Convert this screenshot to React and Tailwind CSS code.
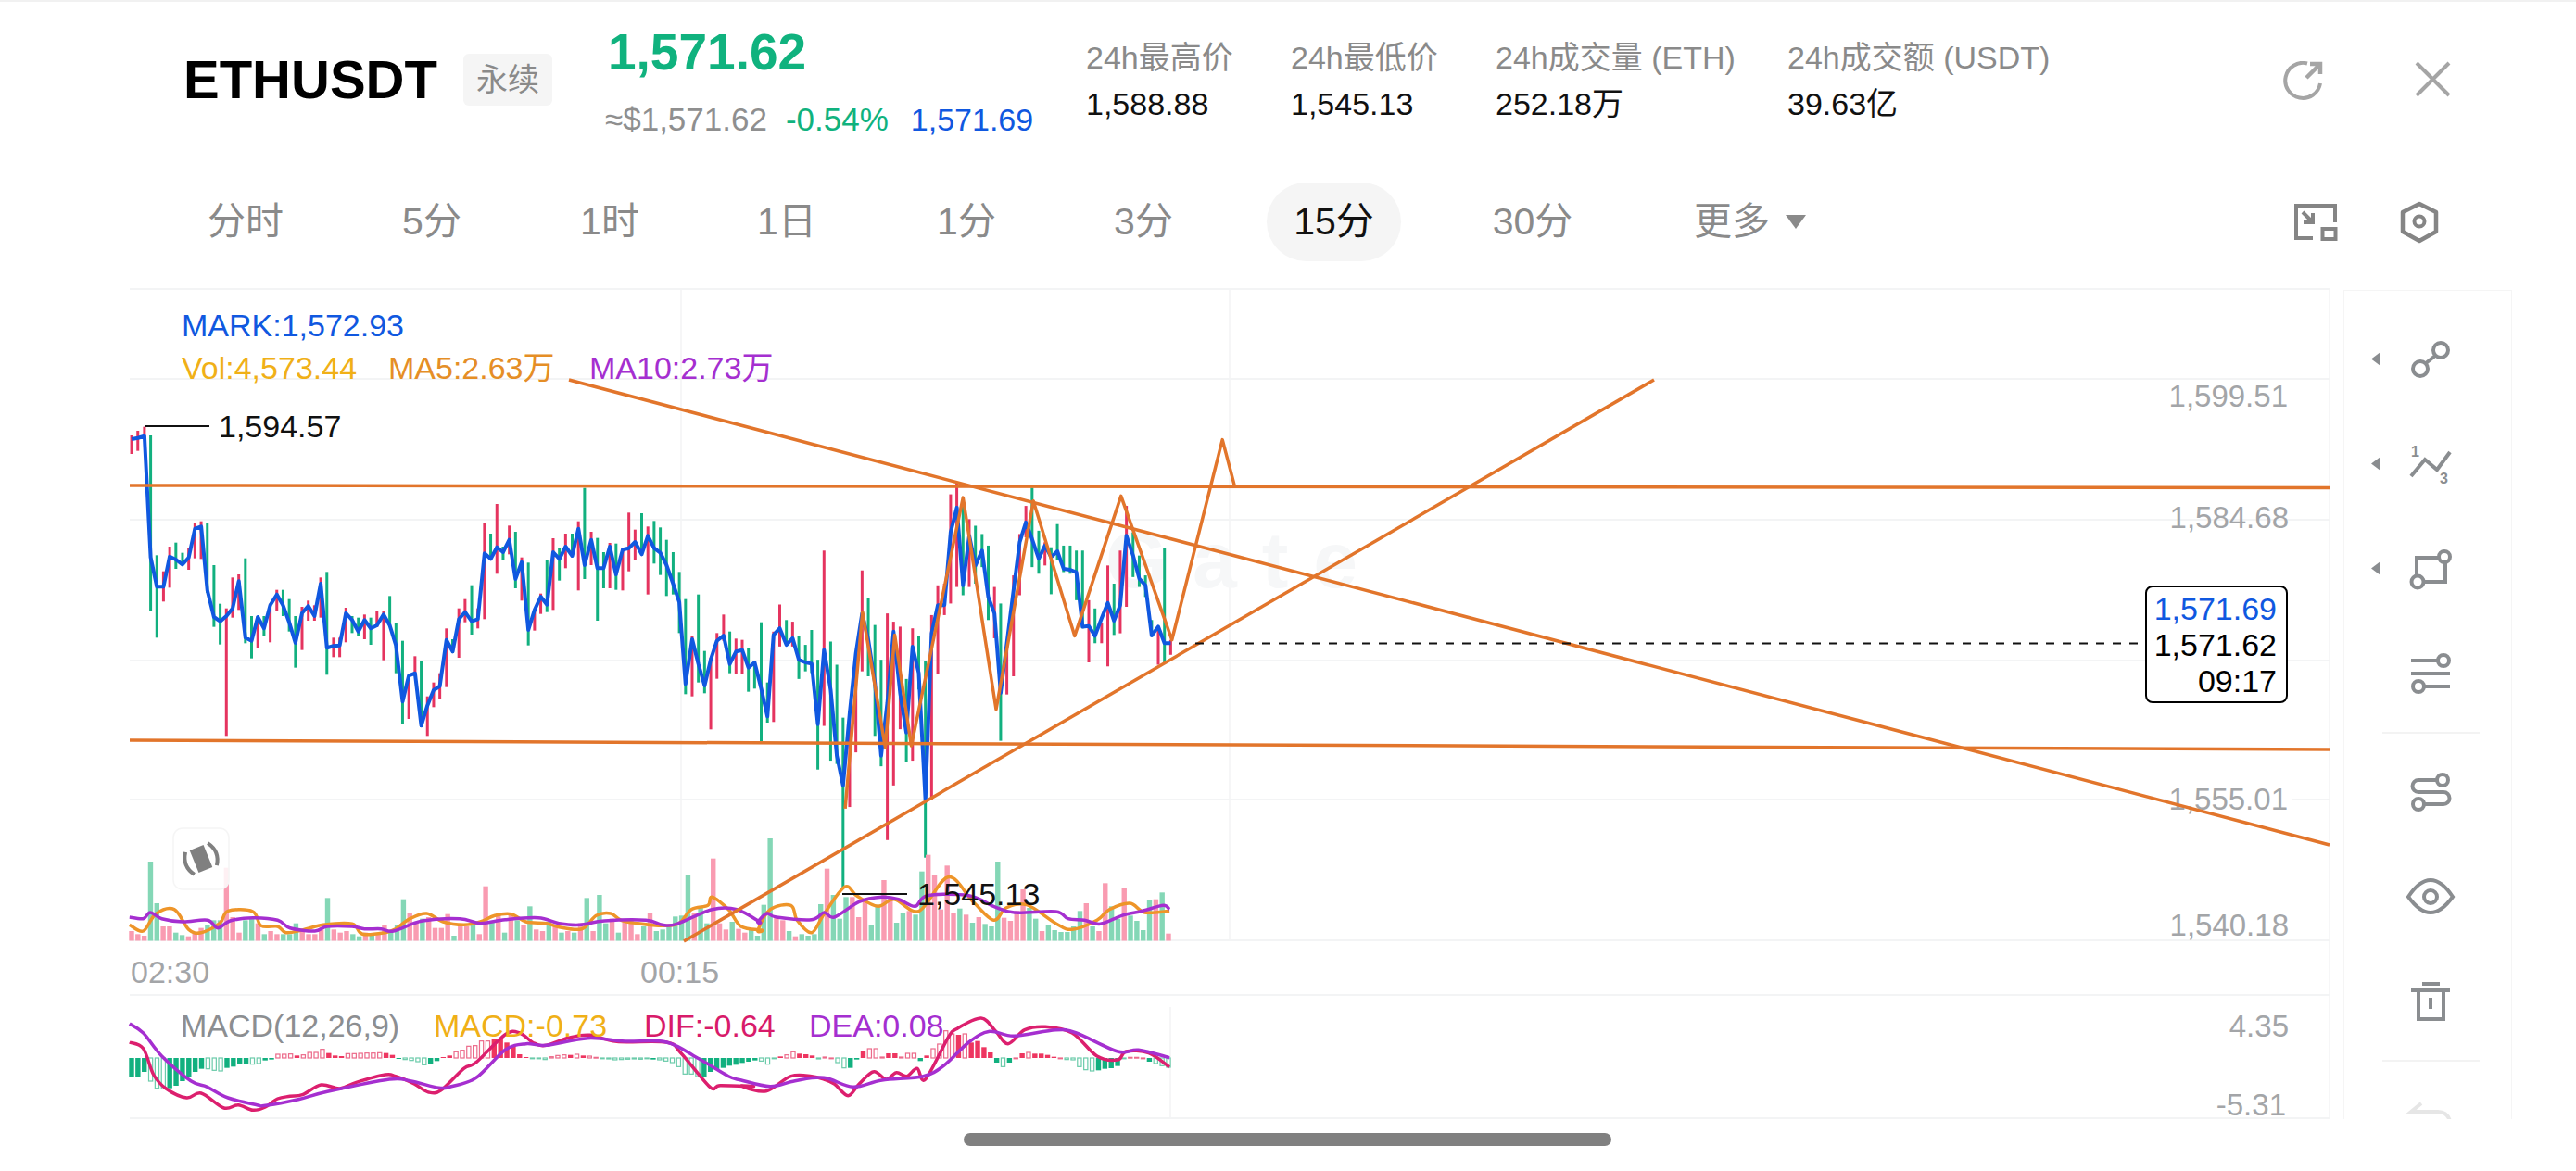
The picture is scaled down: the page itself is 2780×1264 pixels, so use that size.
const FONT = "'Liberation Sans','Noto Sans CJK SC',sans-serif";

const GREEN = '#12b07f';
const RED = '#e5345f';
const BLUE = '#1058e0';
const ORANGE = '#e2752b';
const PURPLE = '#a52fd0';

// crop helpers: readings were taken from zoomed crops of the chart
const a3 = ([X, Y]) => [130 + X / 2.24, 300 + Y / 3];
const a4 = ([X, Y]) => [700 + X / 2.24, 480 + Y / 2.8];
const a5 = ([X, Y]) => [130 + X / 2.24, 880 + Y / 3];
const a6 = ([X, Y]) => [800 + X / 2.24, 880 + Y / 3];
const pts = list => list.map(p => `${p[0].toFixed(1)},${p[1].toFixed(1)}`).join(' ');

// catmull-rom through the points, for the indicator curves
const smooth = list => {
  let d = `M${list[0][0].toFixed(1)} ${list[0][1].toFixed(1)}`;
  for (let i = 0; i < list.length - 1; i++) {
    const p0 = list[i - 1] || list[i];
    const p1 = list[i];
    const p2 = list[i + 1];
    const p3 = list[i + 2] || p2;
    const c1x = p1[0] + (p2[0] - p0[0]) / 6;
    const c1y = p1[1] + (p2[1] - p0[1]) / 6;
    const c2x = p2[0] - (p3[0] - p1[0]) / 6;
    const c2y = p2[1] - (p3[1] - p1[1]) / 6;
    d += `C${c1x.toFixed(1)} ${c1y.toFixed(1)} ${c2x.toFixed(1)} ${c2y.toFixed(1)} ${p2[0].toFixed(1)} ${p2[1].toFixed(1)}`;
  }
  return d;
};

// X, colour, wick top, wick bottom, close
const candles3 = [
  [27,'r',510,570,522],[42,'r',495,560,518],[58,'r',482,515,512],[73,'g',510,1078,905],[88,'g',898,1165,1000],
  [104,'r',950,1048,1000],[119,'r',870,1003,902],[134,'g',857,942,912],[150,'g',890,930,928],[165,'r',875,945,905],
  [180,'r',793,908,812],[195,'r',788,910,805],[210,'g',792,1020,1012],[226,'g',930,1130,1098],[241,'g',1055,1187,1112],
  [256,'r',1070,1483,1095],[271,'r',970,1100,1070],[286,'r',960,1075,982],[302,'g',908,1183,1165],[317,'g',1095,1232,1175],
  [332,'r',1095,1200,1098],[347,'g',1095,1160,1135],[362,'r',1055,1180,1060],[378,'r',1010,1080,1025],[393,'g',1010,1095,1060],
  [408,'g',1040,1145,1115],[423,'g',1095,1262,1182],[439,'r',1065,1205,1085],[454,'r',1045,1110,1062],[469,'r',1060,1110,1095],
  [484,'r',970,1100,990],[499,'g',952,1285,1198],[515,'r',1165,1228,1192],[530,'r',1165,1228,1190],[545,'r',1068,1180,1085],
  [560,'g',1095,1150,1108],[575,'g',1100,1160,1145],[590,'r',1090,1170,1108],[605,'g',1100,1188,1135],[620,'r',1080,1130,1125],
  [636,'r',1078,1238,1090],[651,'g',1030,1130,1125],[666,'g',1118,1280,1190],[682,'g',1175,1443,1372],[697,'r',1290,1428,1288],
  [712,'r',1225,1285,1280],[727,'g',1240,1455,1450],[742,'r',1355,1483,1385],[757,'r',1310,1390,1335],[772,'r',1280,1362,1322],
  [788,'r',1135,1325,1172],[803,'g',1170,1215,1210],[818,'r',1070,1230,1105],[833,'r',1040,1115,1082],[849,'g',995,1155,1112],
  [864,'r',1070,1135,1105],[880,'r',793,1105,892],[895,'g',828,915,910],[910,'r',732,958,872],[925,'g',870,915,888],
  [940,'r',802,895,848],[955,'g',822,1005,975],[970,'r',905,1045,920],[986,'g',922,1190,1140],[1001,'r',1075,1142,1075],
  [1016,'r',1022,1088,1032],[1031,'g',912,1082,1058],[1046,'r',843,1075,888],[1061,'g',875,980,910],[1076,'r',828,940,870],
  [1092,'g',828,900,900],[1107,'r',788,1012,812],[1122,'g',680,975,930],[1138,'r',822,930,848],[1153,'g',842,1110,940],
  [1168,'g',888,1005,940],[1183,'r',858,1005,870],[1198,'g',860,1010,960],[1214,'r',875,1012,880],[1229,'r',760,950,875],
  [1244,'r',815,915,855],[1260,'g',762,895,895],[1275,'r',805,1025,835],[1290,'g',787,925,875],[1305,'g',808,962,890],
  [1320,'g',848,1030,930],[1336,'g',888,1025,990],[1351,'g',952,1150,1050],[1366,'g',1040,1348,1315],[1382,'r',1160,1355,1170],
  [1397,'g',1025,1310,1250],[1412,'g',1208,1345,1320],[1427,'r',1230,1462,1235],[1442,'r',1150,1298,1175],[1458,'r',1090,1175,1158],
  [1473,'g',1145,1280,1250],[1488,'r',1168,1282,1210],[1503,'r',1172,1282,1205],[1518,'g',1200,1340,1262],[1533,'g',1240,1330,1245],
  [1549,'g',1115,1500,1330],[1564,'g',1310,1440,1420],
];

const candles4 = [
  [302,'r',565,838,575],[317,'r',483,610,555],[333,'g',530,600,605],[348,'r',535,610,585],[363,'g',578,708,650],
  [379,'g',605,685,658],[394,'g',560,690,662],[409,'g',650,982,845],[424,'r',320,850,620],[440,'g',595,955,740],
  [455,'g',665,965,940],[470,'g',825,1340,1030],[486,'r',805,1095,810],[501,'r',630,930,630],[516,'r',380,685,510],
  [531,'g',462,700,590],[547,'g',545,880,720],[562,'g',650,972,940],[577,'r',510,1195,780],[592,'r',535,1030,565],
  [608,'r',550,860,750],[623,'g',708,958,870],[638,'r',555,955,610],[653,'g',578,740,690],[669,'g',655,1248,1075],
  [684,'r',515,1075,570],[699,'r',425,692,485],[715,'r',420,515,485],[730,'r',150,480,265],[745,'r',115,430,190],
  [760,'g',175,455,425],[775,'r',225,430,275],[790,'g',245,420,365],[806,'g',270,370,320],[821,'g',305,530,460],
  [836,'r',430,585,510],[851,'g',480,895,750],[866,'r',600,755,600],[882,'r',395,700,440],[897,'r',270,455,295],
  [912,'r',185,280,235],[927,'g',130,370,285],[943,'g',260,390,345],[958,'r',295,365,305],[973,'g',310,452,340],
  [988,'g',240,350,322],[1003,'g',305,385,375],[1019,'g',305,390,378],[1034,'g',320,470,385],[1049,'g',320,555,550],
  [1064,'r',470,658,548],[1079,'g',495,600,578],[1095,'r',540,600,525],[1110,'r',365,670,478],[1125,'g',420,575,532],
  [1140,'r',320,570,485],[1155,'r',185,490,275],[1171,'g',265,400,335],[1186,'g',335,430,405],[1201,'g',395,460,425],
  [1216,'g',530,580,577],[1232,'r',550,665,550],[1247,'g',312,660,600],[1262,'r',590,635,600],
];

const vols5 = 'r375 r385 r390 g150 g285 r360 r360 g380 g388 r392 r380 r365 g355 g340 g340 r170 r330 r380 g340 g330 r350 g385 r375 r385 g385 g385 g350 r375 r385 r385 r370 g268 r370 r380 r375 g385 g392 r380 g382 r385 r355 g378 g355 g272 r315 r345 g335 r330 r365 r365 r320 g390 r355 r360 g355 r385 r230 g345 r315 g380 r320 g340 r355 g295 r370 r375 g345 r355 g380 r375 g380 r350 g268 r375 g258 g350 r335 g380 r345 r340 r385 g360 r318 g375 g370 g360 g328 g325 g195 r315 g300 g350 r140 r350 r370 g345 r368 r380 g370 g390 g290 g75'.split(' ');
const vols6 = 'r330 r340 g375 r392 g385 g390 g385 g288 r173 g258 g335 g265 r265 r330 r275 g357 g290 r210 r270 g348 g315 r310 g322 g182 r128 r195 r305 r163 r318 g302 r322 g348 r330 g352 g360 g150 r332 r342 r310 r240 g300 g335 r375 g355 g372 g378 g378 g360 g310 r285 g360 r375 r220 g295 g335 r237 g325 g342 g372 g275 r272 g250 r383'.split(' ');

const ma5Vol = [
  ...[[22,355],[55,375],[85,320],[130,305],[165,370],[195,380],[240,350],[260,310],[320,312],[340,358],[380,360],[400,380],[440,372],[490,355],[560,352],[585,385],[640,380],[665,368],[700,335],[740,318],[780,345],[830,355],[870,345],[905,325],[945,320],[980,345],[1030,350],[1060,362],[1115,368],[1150,325],[1185,318],[1210,340],[1250,350],[1310,358],[1350,350],[1380,305],[1420,292],[1430,265],[1470,305],[1500,360],[1550,372]].map(a5),
  ...[[40,372],[70,305],[120,292],[135,340],[170,380],[200,320],[250,232],[280,262],[330,295],[370,272],[430,310],[500,200],[560,280],[610,340],[640,300],[690,290],[760,350],[800,370],[860,340],[890,305],[940,285],[975,315],[1035,310]].map(a6),
];
const ma10Vol = [
  ...[[22,330],[55,335],[72,315],[100,335],[150,345],[210,340],[235,365],[265,342],[320,332],[380,340],[410,365],[470,375],[500,360],[560,360],[590,368],[630,368],[660,375],[730,342],[820,335],[870,350],[930,338],[1010,332],[1060,350],[1110,355],[1170,342],[1270,340],[1310,355],[1345,352],[1430,305],[1490,305],[1545,345]].map(a5),
  ...[[40,345],[62,318],[85,330],[170,338],[200,315],[225,330],[285,280],[340,265],[380,272],[420,295],[450,260],[550,260],[610,295],[660,315],[760,312],[790,335],[830,340],[868,352],[920,325],[970,310],[1020,292],[1035,305]].map(a6),
];

const hist5 = '-60F -60F -45F -75H -98H -100H -98F -90F -75F -60F -45F -35F -35H -40H -42H -32F -28F -18F -18F -20H -18H -8F -5F 12H 12H 13H 8F 10H 18H 18H 28H 16F 8F 6F 14H 14H 15H 16H 16H 17H 16F 10F -3F -5H -8H -12H -22H -18F -10F 3F 8F 20H 25H 38H 40H 55H 55H 60F 62F 50F 40F 12F 3F -2H -2H -5H 4H 8H 10H 10F 12H 8F 6H 2H -1H -3H -6H -5H -4H -3H -4H -2H -5F -6H -10H -15H -28H -52H -52H -60H -60F -45F -38F -32F -25F -22F -16F -12F -8F -10H -20H'.split(' ');
const hist6 = '-2H 5F 10H 20H 14F 12F 8F -3H 3H 0H -15H -32H -32F -5F 22F 30H 30H 3H 15F 15F 3H 15H 15H -10F 8F 30H 45H 88H 78H 75F 78H 50F 55F 35F 18F -15F -28H -15F 0H 15F 18H 14F 14F 10F 4F 0H -5H -6H -28H -38H -42H -40F -35F -33F -26F -2H 2H 2H 0H -12F -18H -25H -30H'.split(' ');

const dif = [
  ...[[22,735],[55,755],[80,840],[110,885],[160,915],[195,900],[250,948],[285,938],[320,955],[350,945],[380,918],[410,910],[440,905],[485,873],[530,885],[570,865],[640,840],[665,845],[710,870],[745,897],[775,890],[830,820],[860,800],[930,710],[965,705],[1000,738],[1030,745],[1085,720],[1135,712],[1200,733],[1320,735],[1355,770],[1425,880],[1450,875],[1530,878]].map(a5),
  ...[[0,877],[60,893],[120,845],[170,845],[200,855],[225,870],[258,908],[285,870],[320,830],[350,855],[375,833],[400,845],[425,820],[445,855],[500,720],[520,692],[580,657],[615,700],[645,740],[685,695],[735,685],[800,705],[860,780],[910,792],[930,765],[985,770],[1035,815]].map(a6),
];
const dea = [
  ...[[22,675],[55,705],[100,780],[170,860],[210,880],[260,915],[330,938],[350,940],[430,920],[500,895],[650,855],[700,860],[770,883],[800,878],[860,850],[930,760],[980,740],[1030,745],[1130,722],[1220,732],[1320,735],[1400,790],[1470,845]].map(a5),
  ...[[0,858],[70,878],[130,860],[200,850],[270,880],[340,858],[440,845],[490,810],[550,735],[600,700],[660,715],[760,695],[810,705],[910,765],[960,760],[1035,785]].map(a6),
];

const zigzag = [[475,1100],[517,505],[572,915],[595,575],[635,910],[760,160],[840,800],[930,170],[1030,578],[1142,155],[1265,590],[1387,-15],[1416,122]].map(a4);

const bluePts = [
  ...candles3.map(c => a3([c[0], c[4]])),
  ...candles4.map(c => a4([c[0], c[4]])),
];

function Chart() {
  const wick = c => (c === 'g' ? GREEN : RED);
  const vols = [...vols5, ...vols6];
  const hist = [...hist5, ...hist6];
  const volX = i => 142 + (1261 - 142) * i / (vols.length - 1);
  const histX = i => 142 + (1261 - 142) * i / (hist.length - 1);
  return (
    <svg width="2375" height="897" viewBox="140 311 2375 897" className="block overflow-visible">
      {/* grid */}
      <g stroke="#f3f4f5" strokeWidth="2">
        <path d="M140 312H2515M140 409H2514M140 561H2514M140 713H2514M140 863H2514M140 1015H2514M140 1074H2514M140 1207H2514" />
        <path d="M735 311V1015M1327 311V1015M1263 1087V1207M2514 311V1207" strokeWidth="1.5" />
      </g>

      {/* watermark */}
      <text x="1193" y="634" fontSize="86" fontWeight="700" letterSpacing="27" fill="#f6f7f8">Gate</text>

      {/* candles */}
      {candles3.map(([X, c, hi, lo]) => {
        const [x, y1] = a3([X, hi]);
        const [, y2] = a3([X, lo]);
        return <line key={X} x1={x} x2={x} y1={y1} y2={y2} stroke={wick(c)} strokeWidth="3" />;
      })}
      {candles4.map(([X, c, hi, lo]) => {
        const [x, y1] = a4([X, hi]);
        const [, y2] = a4([X, lo]);
        return <line key={X} x1={x} x2={x} y1={y1} y2={y2} stroke={wick(c)} strokeWidth="3" />;
      })}
      <polyline points={pts(bluePts)} fill="none" stroke={BLUE} strokeWidth="4" strokeLinejoin="round" />

      {/* volume */}
      {vols.map((v, i) => {
        const top = 880 + Number(v.slice(1)) / 3;
        return (
          <rect key={i} x={volX(i) - 2.7} y={top} width="5.4" height={1015.5 - top} fill={v[0] === 'g' ? '#84d7b6' : '#f99bb1'} />
        );
      })}
      <path d={smooth(ma5Vol)} fill="none" stroke="#ee9529" strokeWidth="3.5" />
      <path d={smooth(ma10Vol)} fill="none" stroke={PURPLE} strokeWidth="3.5" />

      {/* axis labels */}
      <rect x="2338" y="850" width="136" height="26" fill="#fff" />
      <g fontSize="33" fill="#a3a5a8" textAnchor="end">
        <text x="2469" y="439">1,599.51</text>
        <text x="2470" y="570">1,584.68</text>
        <text x="2469" y="874">1,555.01</text>
        <text x="2470" y="1010">1,540.18</text>
        <text x="2470" y="1119">4.35</text>
        <text x="2467" y="1204">-5.31</text>
      </g>
      <g fontSize="34" fill="#a3a5a8">
        <text x="141" y="1061">02:30</text>
        <text x="691" y="1061">00:15</text>
      </g>

      {/* macd */}
      {hist.map((v, i) => {
        const h = parseInt(v, 10) / 3;
        const filled = v.endsWith('F');
        const up = h >= 0;
        const x = histX(i) - 2.7;
        const y = up ? 1142 - h : 1142;
        const abs = Math.max(Math.abs(h), 0.8);
        if (filled) {
          return <rect key={i} x={x} y={y} width="5.4" height={abs} fill={up ? '#ee3560' : GREEN} />;
        }
        return (
          <rect key={i} x={x + 0.6} y={y} width="4.2" height={abs} fill="#fff" stroke={up ? '#ec6a8a' : '#6bcbaa'} strokeWidth="1.2" />
        );
      })}
      <path d={smooth(dif)} fill="none" stroke="#dc1f6e" strokeWidth="3.5" />
      <path d={smooth(dea)} fill="none" stroke={PURPLE} strokeWidth="3.5" />

      {/* legends */}
      <g fontSize="34">
        <text x="196" y="363" fill={BLUE}>MARK:1,572.93</text>
        <text x="196" y="409" fill="#f0b017">Vol:4,573.44</text>
        <text x="419" y="409" fill="#e58e26">MA5:2.63万</text>
        <text x="636" y="409" fill={PURPLE}>MA10:2.73万</text>
        <text x="195" y="1119" fill="#8c8e91">MACD(12,26,9)</text>
        <text x="468" y="1119" fill="#f0b017">MACD:-0.73</text>
        <text x="695" y="1119" fill="#d81b6a">DIF:-0.64</text>
        <text x="873" y="1119" fill={PURPLE}>DEA:0.08</text>
      </g>

      {/* drawn lines */}
      <g fill="none" stroke={ORANGE} strokeWidth="3.5" strokeLinejoin="round">
        <line x1="140" y1="524" x2="2514" y2="526.5" />
        <line x1="140" y1="799" x2="2514" y2="809" />
        <line x1="614" y1="410" x2="2514" y2="912" />
        <line x1="738" y1="1016" x2="1785" y2="410" />
        <polyline points={pts(zigzag)} />
      </g>

      {/* extremes and last price */}
      <path d="M156 460H226M909 965H979" stroke="#111" strokeWidth="2" />
      <g fontSize="34" fill="#111">
        <text x="236" y="472">1,594.57</text>
        <text x="990" y="977">1,545.13</text>
      </g>
      <line x1="1272" y1="694.5" x2="2315" y2="694.5" stroke="#111" strokeWidth="2" strokeDasharray="9 9" />

      {/* tv logo chip */}
      <rect x="187" y="894" width="60" height="66" rx="10" fill="#fff" fillOpacity="0.85" stroke="#f5f5f5" strokeWidth="1.5" />
      <g transform="rotate(-22 217 927)" fill="#808080">
        <rect x="209" y="914" width="16" height="26" />
        <path d="M204 914q-9 13 0 26" fill="none" stroke="#808080" strokeWidth="4" />
        <path d="M230 914q9 13 0 26" fill="none" stroke="#808080" strokeWidth="4" />
      </g>
    </svg>
  );
}

function Triangle() {
  return (
    <svg width="10" height="15" viewBox="0 0 10 15" className="block">
      <path d="M10 0V15L0 7.5Z" fill="#8a8d90" />
    </svg>
  );
}

// icons keep their page coordinates in the viewBox
const toolIcons = [
  {
    box: '2592 357 60 60',
    arrow: true,
    body: (
      <g fill="none" stroke="#8a8d90" strokeWidth="4">
        <circle cx="2611" cy="397" r="8" />
        <circle cx="2633" cy="377" r="8" />
        <path d="M2617 391L2627 383" />
      </g>
    ),
  },
  {
    box: '2592 470 60 60',
    arrow: true,
    body: (
      <>
        <polyline points="2601,513 2616,495 2629,506 2643,487" fill="none" stroke="#8a8d90" strokeWidth="4" />
        <text x="2601" y="492" fontSize="16" fontWeight="700" fill="#8a8d90">1</text>
        <text x="2632" y="521" fontSize="16" fontWeight="700" fill="#8a8d90">3</text>
      </>
    ),
  },
  {
    box: '2592 582 60 60',
    arrow: true,
    body: (
      <g fill="none" stroke="#8a8d90" strokeWidth="4">
        <path d="M2631 600H2607V620M2638 605V626H2615" />
        <circle cx="2637" cy="599" r="6" />
        <circle cx="2608" cy="626" r="6.5" />
      </g>
    ),
  },
  {
    box: '2592 696 60 60',
    body: (
      <g fill="none" stroke="#8a8d90" strokeWidth="4">
        <path d="M2601 712H2630M2601 726H2643M2615 740H2643" />
        <circle cx="2636" cy="712" r="6" />
        <circle cx="2609" cy="740" r="6" />
      </g>
    ),
  },
];

const toolIcons2 = [
  {
    box: '2592 825 60 60',
    body: (
      <g fill="none" stroke="#8a8d90" strokeWidth="4">
        <circle cx="2635" cy="842" r="6" />
        <circle cx="2609" cy="868" r="6" />
        <path d="M2629 842H2609a6.5 6.5 0 0 0 0 13H2636a6.5 6.5 0 0 1 0 13H2615" />
      </g>
    ),
  },
  {
    box: '2592 938 60 60',
    body: (
      <g fill="none" stroke="#8a8d90" strokeWidth="4">
        <path d="M2598 968C2606 956 2614 950 2622 950C2630 950 2638 956 2646 968C2638 979 2630 985 2622 985C2614 985 2606 979 2598 968Z" />
        <circle cx="2622" cy="968" r="7" />
      </g>
    ),
  },
  {
    box: '2592 1051 60 60',
    body: (
      <g fill="none" stroke="#8a8d90" strokeWidth="4">
        <path d="M2613 1062H2632M2601 1069H2643M2609 1069V1100H2636V1069" />
        <path d="M2622 1077V1089" />
      </g>
    ),
  },
];

function ToolRow({ icon }) {
  return (
    <div className="flex items-center h-[113px] pl-[29px]">
      <div className="w-[10px]">{icon.arrow && <Triangle />}</div>
      <svg width="60" height="60" viewBox={icon.box} className="block ml-[24px]">
        {icon.body}
      </svg>
    </div>
  );
}

function Toolbar() {
  return (
    <div className="w-[182px] h-[895px] mt-[2px] ml-[14px] border border-b-0 border-[#f5f5f5] overflow-hidden flex flex-col">
      <div className="pt-[17px]">
        {toolIcons.map((icon, i) => <ToolRow key={i} icon={icon} />)}
      </div>
      <div className="h-[2px] w-[105px] ml-[41px] mt-[7px] mb-[7px] bg-[#f3f3f3]" />
      {toolIcons2.map((icon, i) => <ToolRow key={i} icon={icon} />)}
      <div className="h-[2px] w-[105px] ml-[41px] mt-[7px] bg-[#f3f3f3]" />
      <svg width="60" height="30" viewBox="2592 1180 60 30" className="block ml-[63px] mt-[32px]">
        <path d="M2612 1193L2601 1202H2630Q2640 1202 2643 1212" fill="none" stroke="#e6e6e6" strokeWidth="4" />
      </svg>
    </div>
  );
}

const stats = [
  { label: '24h最高价', value: '1,588.88', w: 'w-[221px]' },
  { label: '24h最低价', value: '1,545.13', w: 'w-[221px]' },
  { label: '24h成交量 (ETH)', value: '252.18万', w: 'w-[315px]' },
  { label: '24h成交额 (USDT)', value: '39.63亿', w: 'w-[300px]' },
];

const tabs = [
  { label: '分时', w: 'w-[200px]' },
  { label: '5分', w: 'w-[202px]' },
  { label: '1时', w: 'w-[182px]' },
  { label: '1日', w: 'w-[200px]' },
  { label: '1分', w: 'w-[188px]' },
  { label: '3分', w: 'w-[194px]' },
];

export default function App() {
  return (
    <div
      className="w-[2780px] h-[1264px] bg-white overflow-hidden border-t-2 border-[#f1f1f1]"
      style={{ fontFamily: FONT }}
    >
      {/* Header */}
      <div className="flex h-[195px] pl-[198px]">
        <div className="flex items-center h-[168px] w-[455px]">
          <span className="text-[58px] leading-none font-bold text-black">ETHUSDT</span>
          <span className="ml-[28px] w-[96px] h-[56px] rounded-[6px] bg-[#f5f5f5] text-[#8a8a8a] text-[34px] flex items-center justify-center">
            永续
          </span>
        </div>
        <div className="w-[519px] pt-[24px]">
          <div className="ml-[3px] text-[55px] leading-[60px] font-bold text-[#10b27e]">1,571.62</div>
          <div className="flex mt-[23px] text-[35px] leading-[40px]">
            <span className="text-[#8f8f8f]">≈$1,571.62</span>
            <span className="ml-[20px] text-[#10b27e]">-0.54%</span>
            <span className="ml-[24px] text-[34px] text-[#1058e0]">1,571.69</span>
          </div>
        </div>
        {stats.map(s => (
          <div key={s.label} className={`${s.w} pt-[40px]`}>
            <div className="text-[34px] leading-[40px] text-[#8a8a8a]">{s.label}</div>
            <div className="mt-[10px] text-[34px] leading-[40px] text-[#111]">{s.value}</div>
          </div>
        ))}
        <div className="flex items-start pt-[64px]">
          <svg width="44" height="44" viewBox="2464 66 44 44" className="block ml-[235px]">
            <path d="M2490 68.5A19 19 0 1 0 2504 90" fill="none" stroke="#a5a5a5" strokeWidth="4" />
            <path d="M2489 84L2502 71M2493 69H2504V80" fill="none" stroke="#a5a5a5" strokeWidth="4.5" />
          </svg>
          <svg width="40" height="40" viewBox="2606 66 40 40" className="block ml-[98px]">
            <path d="M2608 68L2643 103M2643 68L2608 103" stroke="#a5a5a5" strokeWidth="4" />
          </svg>
        </div>
      </div>

      {/* Period tabs */}
      <div className="flex items-center h-[85px] pl-[165px] text-[41px] text-[#8a8a8a]">
        {tabs.map(t => (
          <div key={t.label} className={`${t.w} text-center`}>{t.label}</div>
        ))}
        <div className="w-[145px] ml-[36px] h-[85px] rounded-full bg-[#f5f5f5] flex items-center justify-center text-[#111]">
          15分
        </div>
        <div className="w-[200px] ml-[42px] text-center">30分</div>
        <div className="flex items-center ml-[74px]">
          更多
          <svg width="22" height="16" viewBox="0 0 22 16" className="block ml-[17px]">
            <path d="M0 0H22L11 15Z" fill="#8a8a8a" />
          </svg>
        </div>
        <svg width="50" height="44" viewBox="2475 218 50 44" className="block ml-[525px]">
          <path d="M2497 257H2479V222H2521V240" fill="none" stroke="#858585" strokeWidth="4" />
          <rect x="2507.5" y="247" width="14" height="11" fill="none" stroke="#858585" strokeWidth="4" />
          <path d="M2486 229L2496 239M2497 230V240H2487" fill="none" stroke="#858585" strokeWidth="4" />
        </svg>
        <svg width="44" height="48" viewBox="2590 216 44 48" className="block ml-[65px]">
          <path d="M2612 220L2630 229V250L2612 260L2594 250V229Z" fill="none" stroke="#858585" strokeWidth="4.5" strokeLinejoin="round" />
          <circle cx="2612" cy="239" r="5.5" fill="none" stroke="#858585" strokeWidth="4" />
        </svg>
      </div>

      {/* Chart and drawing tools */}
      <div className="flex mt-[29px] ml-[140px]">
        <div className="relative w-[2375px] h-[897px]">
          <Chart />
          <div className="absolute left-[2175px] top-[321px] w-[154px] h-[127px] border-2 border-black rounded-[8px] bg-white pr-[10px] py-[4px] text-right text-[34px] leading-[39px] text-black">
            <div className="text-[#1058e0]">1,571.69</div>
            <div>1,571.62</div>
            <div>09:17</div>
          </div>
        </div>
        <Toolbar />
      </div>

      {/* Home indicator */}
      <div className="mt-[15px] flex justify-center">
        <div className="ml-[-1px] w-[699px] h-[14px] rounded-full bg-[#808080]" />
      </div>
    </div>
  );
}
